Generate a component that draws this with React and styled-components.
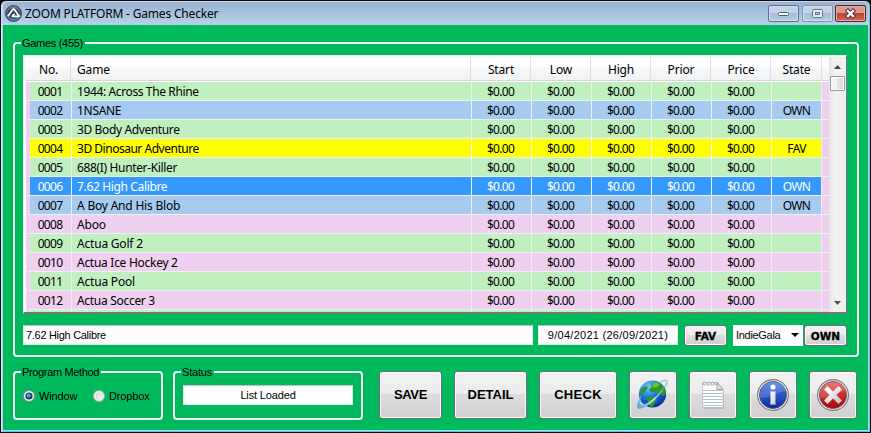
import React from 'react';
import styled, { createGlobalStyle, css } from 'styled-components';

const GlobalStyle = createGlobalStyle`
  body { margin: 0; overflow: hidden; background: #000; }
  * { box-sizing: border-box; }
`;

const GREEN = '#00b95c';
const UI = '"Noto Sans", "Open Sans", sans-serif';
const SMALL = '"Liberation Sans", Arial, sans-serif';

const Window = styled.div`
  width: 871px;
  height: 433px;
  display: flex;
  flex-direction: column;
  background: #b9d1ea;
  border: 1px solid #0a0f14;
  border-radius: 6px 6px 0 0;
  box-shadow: inset 1px 0 #d9eafa, inset -1px 0 #5fd0e8, inset 0 -1px #4fc9e4, inset 0 1px #c9d9ea;
  padding: 1px 2px 2px;
`;
const TitleBar = styled.header`
  height: 23px;
  flex: none;
  display: flex;
  align-items: flex-start;
  padding: 3px 2px 0 2px;
  border-radius: 5px 5px 0 0;
  background: linear-gradient(#98b4d2, #b9d1ea);
`;
const Title = styled.h1`
  margin: 0 auto 0 3px;
  font: 12px/18px ${UI};
  letter-spacing: ${(p) => p.$ls}px;
  color: #000;
  white-space: nowrap;
`;
const CaptionButton = styled.button`
  width: ${(p) => p.$w || 30}px;
  height: 17px;
  margin-left: ${(p) => p.$gap ?? 3}px;
  padding: 0;
  display: flex;
  align-items: center;
  justify-content: center;
  border: 1px solid ${(p) => (p.$close ? '#5a2328' : p.$dim ? '#8296b2' : '#5a6e8c')};
  border-radius: 2px;
  box-shadow: inset 0 0 0 1px ${(p) => (p.$close ? '#e3aca2' : '#d0dfee')};
  background: ${(p) =>
    p.$close
      ? 'linear-gradient(#d99a8d 0 45%, #bf4130 50%, #cf6a52)'
      : 'linear-gradient(#c3d4e7 0 45%, #a4bcd7 50%, #b9cee5)'};
`;
const Client = styled.main`
  flex: 1;
  background: ${GREEN};
  padding: 11px 9px 0 10px;
`;
const Group = styled.fieldset`
  width: ${(p) => p.$w}px;
  height: ${(p) => p.$h}px;
  flex: none;
  margin: 0;
  min-width: 0;
  padding: ${(p) => p.$pad};
  border: 2px solid #f0fcf5;
  border-radius: 4px;
`;
const Legend = styled.legend`
  margin-left: -2px;
  padding: 0 2px 0 1px;
  height: 14px;
  font: 11px/14px ${SMALL};
  letter-spacing: ${(p) => p.$ls || 0}px;
  color: #000;
  white-space: nowrap;
`;
const List = styled.div`
  width: 824px;
  height: 259px;
  display: flex;
  overflow: hidden;
  background: #fff;
  border: 1px solid #f4f4f4;
  border-right: 1px solid #777;
  border-bottom: 2px solid #777;
  padding: 1px 1px 0 2px;
  font: 12px/18px ${UI};
`;
const Table = styled.div`
  width: 803px;
  flex: none;
`;
const HeadRow = styled.div`
  display: grid;
  grid-template-columns: 45px 400px 60px 60px 60px 60px 60px 51px 7px;
  height: 24px;
  margin-bottom: 1px;
  border-bottom: 1px solid #d5d5d5;
  background: linear-gradient(#fff 0 45%, #f7f8fa 46%, #f1f2f4);
`;
const HeadCell = styled.div`
  border-right: 1px solid #dedfe1;
  text-align: ${(p) => (p.$left ? 'left' : 'center')};
  padding: 4px 0 0 ${(p) => (p.$left ? 6 : 1)}px;
  letter-spacing: -0.15px;
  &:last-child { border-right: 0; }
`;
const tone = {
  green: ['#c0f0c0', '#000'],
  pink: ['#f0d0f0', '#000'],
  own: ['#a6caf0', '#000'],
  fav: ['#ffff00', '#000'],
  sel: ['#3399ff', '#fff'],
};
const Row = styled.div`
  display: grid;
  grid-template-columns: 42px 400px 60px 60px 60px 60px 60px 50px 7px;
  width: 803px;
  height: 19px;
  border-left: 4px solid #f0d0f0;
  border-bottom: 1px solid #f0f0f0;
  background: ${(p) => tone[p.$tone][0]};
  color: ${(p) => tone[p.$tone][1]};
`;
const Cell = styled.div`
  height: 18px;
  line-height: 20px;
  overflow: hidden;
  border-right: 1px solid #f0f0f0;
  text-align: ${(p) => (p.$left ? 'left' : 'center')};
  padding-left: ${(p) => (p.$left ? 5 : 0)}px;
  padding-right: ${(p) => p.$pr || 0}px;
  letter-spacing: ${(p) => p.$ls ?? -0.7}px;
  white-space: nowrap;
`;
const RowEnd = styled.div`
  background: #f0d0f0;
`;
const ScrollBar = styled.div`
  width: 17px;
  flex: none;
  display: flex;
  flex-direction: column;
  align-items: center;
  background: linear-gradient(90deg, #e6e6e6, #f1f1f1 30%, #f0f0f0);
`;
const ScrollArrow = styled.svg`
  width: 17px;
  height: 19px;
  display: block;
`;
const Thumb = styled.div`
  width: 15px;
  height: 15px;
  margin-bottom: auto;
  border: 1px solid #979797;
  border-radius: 1px;
  box-shadow: inset 0 0 0 1px #fafafa;
  background: linear-gradient(90deg, #f4f4f4 45%, #e4e4e4 50%, #dadada);
`;
const Line = styled.div`
  display: flex;
  align-items: flex-start;
  margin-top: ${(p) => p.$mt || 0}px;
`;
const Field = styled.div`
  width: ${(p) => p.$w}px;
  height: 20px;
  margin-right: ${(p) => p.$mr || 0}px;
  padding: 0 2px;
  background: #fff;
  border: 1px solid #e4efe9;
  border-top-color: #b9c6bf;
  font: 11px/19px ${SMALL};
  text-align: ${(p) => (p.$center ? 'center' : 'left')};
  letter-spacing: ${(p) => p.$ls || 0}px;
  color: #000;
  white-space: nowrap;
`;
const face = css`
  border: 1px solid #6f6f6f;
  border-radius: 3px;
  box-shadow: inset 0 0 0 1px #fbfbfb;
  background: linear-gradient(#f2f2f2, #ebebeb 47%, #dddddd 48%, #cfcfcf);
  color: #000;
`;
const SmallButton = styled.button`
  ${face}
  width: 43px;
  height: 21px;
  flex: none;
  padding: 0;
  margin-right: ${(p) => p.$mr || 0}px;
  font: 900 10.5px/18px "DejaVu Sans", sans-serif;
  letter-spacing: ${(p) => p.$ls || 0}px;
  -webkit-text-stroke: 0.3px #000;
`;
const Select = styled.div`
  width: 70px;
  height: 21px;
  margin-right: 1px;
  display: flex;
  align-items: center;
  justify-content: space-between;
  padding: 0 4px 1px 3px;
  background: #fff;
  font: 11px/18px ${SMALL};
  letter-spacing: -0.3px;
`;
const Footer = styled.footer`
  display: flex;
  align-items: flex-start;
  margin-top: 8px;
`;
const Radio = styled.label`
  display: flex;
  align-items: center;
  gap: 4px;
  width: 70px;
  flex: none;
  font: 11px/14px ${SMALL};
  letter-spacing: -0.15px;
  color: #000;
`;
const BigButton = styled.button`
  ${face}
  width: ${(p) => p.$w || 48}px;
  height: 48px;
  flex: none;
  margin: 6px 0 0 ${(p) => p.$ml || 12}px;
  padding: 0;
  display: flex;
  align-items: center;
  justify-content: center;
  font: bold 13px/16px ${SMALL};
  letter-spacing: ${(p) => p.$ls || 0}px;
`;
const Gap = styled.div`
  width: 10px;
  flex: none;
`;

const games = [
  ['1944: Across The Rhine', 'green', '', -0.38],
  ['1NSANE', 'own', 'OWN', -0.3],
  ['3D Body Adventure', 'green', '', -0.38],
  ['3D Dinosaur Adventure', 'fav', 'FAV', -0.48],
  ['688(I) Hunter-Killer', 'green', '', -0.35],
  ['7.62 High Calibre', 'sel', 'OWN', -0.35],
  ['A Boy And His Blob', 'own', 'OWN', -0.2],
  ['Aboo', 'pink', '', -0.2],
  ['Actua Golf 2', 'green', '', -0.2],
  ['Actua Ice Hockey 2', 'pink', '', -0.28],
  ['Actua Pool', 'green', '', -0.2],
  ['Actua Soccer 3', 'pink', '', -0.3],
];
const prices = ['Start', 'Low', 'High', 'Prior', 'Price'];

const AppLogo = () => (
  <svg width="17" height="17" viewBox="0 0 17 17">
    <defs>
      <linearGradient id="lg" x1="0" y1="0" x2="0" y2="1">
        <stop offset="0" stopColor="#6b7480" /><stop offset=".5" stopColor="#2c3947" /><stop offset="1" stopColor="#3b80b8" />
      </linearGradient>
    </defs>
    <circle cx="8.5" cy="8.5" r="8" fill="url(#lg)" stroke="#3d4b5c" />
    <circle cx="8.5" cy="8.5" r="6.6" fill="none" stroke="#8fa0b2" strokeWidth=".6" />
    <path d="M2.8 11.3 8 4.2h1.2l5 7.1H7.4l1.4-2 .8.6" fill="none" stroke="#fff" strokeWidth="1.7" strokeLinejoin="round" />
  </svg>
);
const RadioDot = ({ on }) => (
  <svg width="12" height="12" viewBox="0 0 12 12">
    <circle cx="6" cy="6" r="5.5" fill="#f4f4f4" stroke={on ? '#7c8790' : '#a2aaa6'} />
    <circle cx="6" cy="6" r="3.6" fill={on ? '#173d5c' : '#d9dbdc'} />
    {on ? <circle cx="5.6" cy="5.4" r="2" fill="#43a9d8" /> : <circle cx="6.8" cy="6.8" r="2.5" fill="#ececec" />}
  </svg>
);
const Globe = () => (
  <svg width="34" height="34" viewBox="0 0 34 34">
    <defs>
      <radialGradient id="gb" cx=".35" cy=".25" r=".8">
        <stop offset="0" stopColor="#75c6ff" /><stop offset=".45" stopColor="#1f7ae0" /><stop offset="1" stopColor="#062c9c" />
      </radialGradient>
      <linearGradient id="rg" x1="0" y1="1" x2="1" y2="0">
        <stop offset="0" stopColor="#4f9fce" /><stop offset=".5" stopColor="#b9e2f7" /><stop offset="1" stopColor="#6ba4c4" />
      </linearGradient>
    </defs>
    <path d="M24 4.500C27 2 31 1.500 31 4c0 2-1 4-3 6" fill="none" stroke="#9fc3d6" strokeWidth="1.600" />
    <circle cx="16.500" cy="16" r="13.600" fill="url(#gb)" />
    <path d="M15 6l5-2.500 5 2 4 5 1 5-3 3-2-3-3 1-3-3-4 1-2-3 3-2zM5 12l4-4 3 1-2 4-3 3-2 2zM13 18l5 1 3 3-2 3-3 5-3-3-1-4-2-2z" fill="#2b9a24" />
    <path d="M16 6l4-2 4 2-3 3-4 1z" fill="#5fc340" />
    <path d="M5 17C1.500 23 0 29 2 30.500c3 1.500 11-3 17-9s9-10 9-13C26 12 22 17 17 21S7.500 27.500 5.500 26.500c-1.500-.8-1.500-5-.5-9.500Z" fill="url(#rg)" />
  </svg>
);
const Note = () => (
  <svg width="24" height="30" viewBox="0 0 24 30">
    <path d="M2 3h13l7 7v18H2z" fill="#999" opacity=".5" transform="translate(.8 .9)" />
    <path d="M1.500 2.500H16l6 7V27.500H1.500z" fill="#fdfdfd" stroke="#aeb3b6" strokeWidth=".7" />
    <path d="M2 10.500h19M2 13.500h19M2 16.500h19M2 19.500h19M2 22.500h19M2 25.500h19" stroke="#afc4cf" />
    <path d="M16 2.500V9.500h6z" fill="#e2e2e2" stroke="#949494" strokeWidth=".8" />
    <g fill="#fff" stroke="#999" strokeWidth=".9">
      <circle cx="3.500" cy="3.800" r="1.400" /><circle cx="7.500" cy="3.800" r="1.400" /><circle cx="11.500" cy="3.800" r="1.400" /><circle cx="14.800" cy="3.800" r="1.200" />
    </g>
  </svg>
);
const Disc = ({ id, from, to, children }) => (
  <svg width="34" height="34" viewBox="0 0 34 34">
    <defs>
      <linearGradient id={id} x1="0" y1="0" x2="0" y2="1">
        <stop offset="0" stopColor={from} /><stop offset="1" stopColor={to} />
      </linearGradient>
      <linearGradient id={id + 'm'} x1="0" y1="0" x2="1" y2="1">
        <stop offset="0" stopColor="#fff" /><stop offset="1" stopColor="#c9ccd0" />
      </linearGradient>
    </defs>
    <circle cx="17" cy="17" r="15.400" fill="#f2f2f2" stroke="#777" strokeWidth="1.100" />
    <circle cx="17" cy="17" r="13.600" fill={`url(#${id})`} stroke="#555" strokeWidth=".8" />
    <path d="M4 17C4 9 10 4 17 4s13 4 13 9C22 13 18 20 4 20z" fill="#fff" opacity=".16" />
    {children}
  </svg>
);

export default function App() {
  return (
    <>
      <GlobalStyle />
      <Window>
        <TitleBar>
          <AppLogo />
          <Title $ls={-0.18}>ZOOM PLATFORM - Games Checker</Title>
          <CaptionButton $gap={0} $w={31}>
            <svg width="12" height="6"><rect x=".5" y="1.500" width="10" height="3" rx="1" fill="#fff" stroke="#555c68" /></svg>
          </CaptionButton>
          <CaptionButton $dim $w={31}>
            <svg width="11" height="9"><rect x=".5" y=".5" width="10" height="8" rx="1" fill="#e8edf3" stroke="#6a7384" /><rect x="3.500" y="3.500" width="4" height="2" fill="#b4c6da" stroke="#6a7384" /></svg>
          </CaptionButton>
          <CaptionButton $close $w={31} $gap={2}>
            <svg width="13" height="11" viewBox="0 0 13 11"><path d="m4 3 5 5m0-5-5 5" stroke="#4d3238" strokeWidth="4.400" strokeLinecap="square" /><path d="m4 3 5 5m0-5-5 5" stroke="#fff" strokeWidth="2.400" strokeLinecap="square" /></svg>
          </CaptionButton>
        </TitleBar>
        <Client>
          <Group $w={846} $h={321} $pad="5px 8px 0">
            <Legend $ls={-0.3}>Games (455)</Legend>
            <List>
              <Table>
                <HeadRow>
                  <HeadCell>No.</HeadCell>
                  <HeadCell $left>Game</HeadCell>
                  {prices.map((p) => <HeadCell key={p}>{p}</HeadCell>)}
                  <HeadCell>State</HeadCell>
                  <HeadCell />
                </HeadRow>
                {games.map(([name, t, state, ls], i) => (
                  <Row key={name} $tone={t}>
                    <Cell $pr={1}>{String(i + 1).padStart(4, '0')}</Cell>
                    <Cell $left $ls={ls}>{name}</Cell>
                    {prices.map((p) => <Cell key={p} $pr={2}>$0.00</Cell>)}
                    <Cell>{state}</Cell>
                    <RowEnd />
                  </Row>
                ))}
                <Row $tone="green">
                  {Array.from({ length: 8 }, (_, i) => <Cell key={i} />)}
                  <RowEnd />
                </Row>
              </Table>
              <ScrollBar>
                <ScrollArrow viewBox="0 0 17 19"><path d="M5 12h7L8.500 8z" fill="#444" /></ScrollArrow>
                <Thumb />
                <ScrollArrow viewBox="0 0 17 19"><path d="M5 8h7l-3.500 4z" fill="#555" /></ScrollArrow>
              </ScrollBar>
            </List>
            <Line $mt={11}>
              <Field $w={510} $mr={5} $ls={-0.3}>7.62 High Calibre</Field>
              <Field $w={140} $mr={6} $center $ls={0.27}>9/04/2021 (26/09/2021)</Field>
              <SmallButton $mr={6}>FAV</SmallButton>
              <Select>
                IndieGala
                <svg width="8" height="4"><path d="M0 0h8L4 4z" /></svg>
              </Select>
              <SmallButton>OWN</SmallButton>
            </Line>
          </Group>
          <Footer>
            <Group $w={150} $h={55} $pad="10px 8px 0">
              <Legend $ls={-0.35}>Program Method</Legend>
              <Line>
                <Radio><RadioDot on />Window</Radio>
                <Radio><RadioDot />Dropbox</Radio>
              </Line>
            </Group>
            <Gap />
            <Group $w={190} $h={55} $pad="6px 8px 0">
              <Legend $ls={-0.2}>Status</Legend>
              <Field $w={170} $center $ls={-0.15}>List Loaded</Field>
            </Group>
            <BigButton $w={63} $ml={16} $ls={-0.35}>SAVE</BigButton>
            <BigButton $w={73}>DETAIL</BigButton>
            <BigButton $w={78} $ls={0.3}>CHECK</BigButton>
            <BigButton><Globe /></BigButton>
            <BigButton><Note /></BigButton>
            <BigButton>
              <Disc id="blue" from="#4c7de0" to="#0b2aa5">
                <circle cx="17" cy="9" r="2.600" fill="#fff" />
                <path d="M14 13.500h5.500v11.500c0 1 .5 1.500 1.300 1.500h-7.600c.8 0 1.300-.5 1.300-1.500V15.500c0-1-.2-1.500-.5-2z" fill="url(#bluem)" />
              </Disc>
            </BigButton>
            <BigButton>
              <Disc id="red" from="#ea5a56" to="#b00005">
                <path d="m11.500 11.500 11 11m0-11-11 11" stroke="url(#redm)" strokeWidth="4.800" strokeLinecap="square" />
              </Disc>
            </BigButton>
          </Footer>
        </Client>
      </Window>
    </>
  );
}
